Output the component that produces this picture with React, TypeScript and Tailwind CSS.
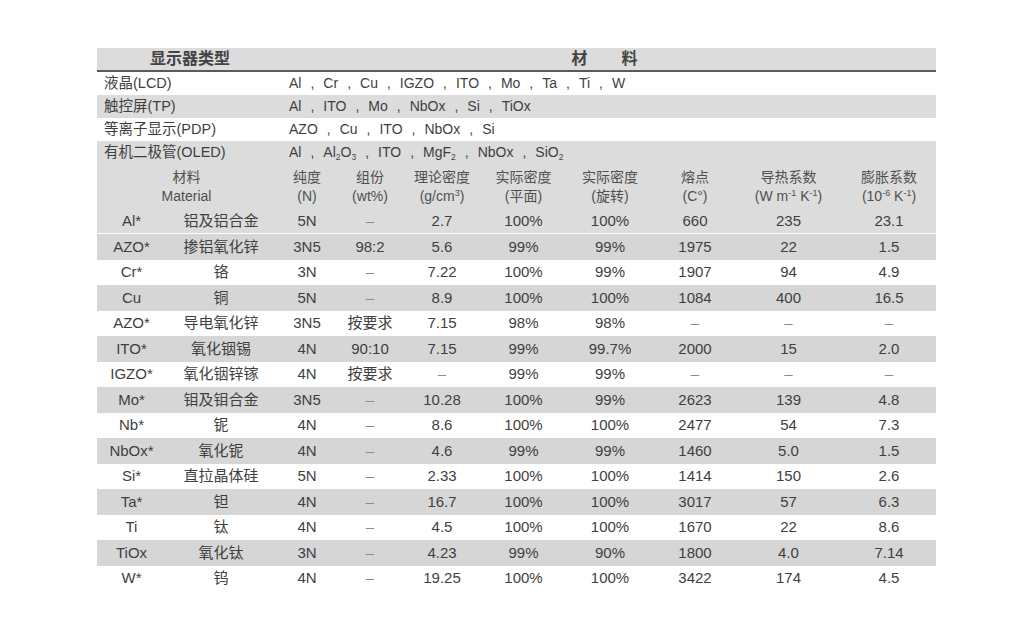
import React from 'react';

const font = { fontFamily: '"Liberation Sans", "Noto Sans CJK SC", sans-serif' };

const sub = 'text-[8.5px] align-baseline relative top-[3px]';

function Sep() {
  return <span className="mx-[9px]">,</span>;
}

function List({ items }: { items: React.ReactNode[] }) {
  return (
    <>
      {items.map((it, i) => (
        <React.Fragment key={i}>
          {i > 0 && <Sep />}
          {it}
        </React.Fragment>
      ))}
    </>
  );
}

const displays: { name: string; mats: React.ReactNode; gray: boolean }[] = [
  { name: '液晶(LCD)', mats: <List items={['Al', 'Cr', 'Cu', 'IGZO', 'ITO', 'Mo', 'Ta', 'Ti', 'W']} />, gray: false },
  { name: '触控屏(TP)', mats: <List items={['Al', 'ITO', 'Mo', 'NbOx', 'Si', 'TiOx']} />, gray: true },
  { name: '等离子显示(PDP)', mats: <List items={['AZO', 'Cu', 'ITO', 'NbOx', 'Si']} />, gray: false },
  {
    name: '有机二极管(OLED)',
    mats: (
      <List
        items={[
          'Al',
          <>
            Al<sub className={sub}>2</sub>O<sub className={sub}>3</sub>
          </>,
          'ITO',
          <>
            MgF<sub className={sub}>2</sub>
          </>,
          'NbOx',
          <>
            SiO<sub className={sub}>2</sub>
          </>,
        ]}
      />
    ),
    gray: true,
  },
];

const rows: string[][] = [
  ['AZO*', '掺铝氧化锌', '3N5', '98:2', '5.6', '99%', '99%', '1975', '22', '1.5'],
  ['Cr*', '铬', '3N', '–', '7.22', '100%', '99%', '1907', '94', '4.9'],
  ['Cu', '铜', '5N', '–', '8.9', '100%', '100%', '1084', '400', '16.5'],
  ['AZO*', '导电氧化锌', '3N5', '按要求', '7.15', '98%', '98%', '–', '–', '–'],
  ['ITO*', '氧化铟锡', '4N', '90:10', '7.15', '99%', '99.7%', '2000', '15', '2.0'],
  ['IGZO*', '氧化铟锌镓', '4N', '按要求', '–', '99%', '99%', '–', '–', '–'],
  ['Mo*', '钼及钼合金', '3N5', '–', '10.28', '100%', '99%', '2623', '139', '4.8'],
  ['Nb*', '铌', '4N', '–', '8.6', '100%', '100%', '2477', '54', '7.3'],
  ['NbOx*', '氧化铌', '4N', '–', '4.6', '99%', '99%', '1460', '5.0', '1.5'],
  ['Si*', '直拉晶体硅', '5N', '–', '2.33', '100%', '100%', '1414', '150', '2.6'],
  ['Ta*', '钽', '4N', '–', '16.7', '100%', '100%', '3017', '57', '6.3'],
  ['Ti', '钛', '4N', '–', '4.5', '100%', '100%', '1670', '22', '8.6'],
  ['TiOx', '氧化钛', '3N', '–', '4.23', '99%', '90%', '1800', '4.0', '7.14'],
  ['W*', '钨', '4N', '–', '19.25', '100%', '100%', '3422', '174', '4.5'],
];

const cols = 'grid grid-cols-[69px_110px_62px_64px_80px_83px_90px_80px_107px_94px]';

function Cell({ v }: { v: string }) {
  return (
    <div className={`flex items-center justify-center ${v === '–' ? 'text-[#8a8a8a]' : ''}`}>{v}</div>
  );
}

export default function App() {
  return (
    <div className="min-h-screen bg-white pt-[48px] pl-[97px] text-[#3f3f3f]" style={font}>
      <div className="w-[839px]">
        {/* 显示器类型 / 材料 */}
        <div className="flex h-[24px] bg-[#dcdcdc] border-b-2 border-[#5a5a5a] text-[16px] font-bold text-[#444]">
          <div className="w-[186px] flex items-center justify-center">显示器类型</div>
          <div className="flex-1 flex items-center justify-center gap-[34px] pr-[10px]">
            <span>材</span>
            <span>料</span>
          </div>
        </div>
        {displays.map((d) => (
          <div
            key={d.name}
            className={`flex h-[23px] items-center ${d.gray ? 'bg-[#dcdcdc]' : 'bg-white'}`}
          >
            <div className="w-[186px] pl-[7px] text-[14.5px]">{d.name}</div>
            <div className="flex-1 pl-[6px] text-[14px]">{d.mats}</div>
          </div>
        ))}

        {/* 材料属性表 */}
        <div className={`${cols} h-[45px] bg-[#dcdcdc] text-[14px] leading-[19px] text-[#505050]`}>
          <div className="col-span-2 flex flex-col items-center justify-center">
            <span>材料</span>
            <span>Material</span>
          </div>
          <div className="flex flex-col items-center justify-center">
            <span>纯度</span>
            <span>(N)</span>
          </div>
          <div className="flex flex-col items-center justify-center">
            <span>组份</span>
            <span>(wt%)</span>
          </div>
          <div className="flex flex-col items-center justify-center">
            <span>理论密度</span>
            <span>
              (g/cm<sup className="text-[9px]">3</sup>)
            </span>
          </div>
          <div className="flex flex-col items-center justify-center">
            <span>实际密度</span>
            <span>(平面)</span>
          </div>
          <div className="flex flex-col items-center justify-center">
            <span>实际密度</span>
            <span>(旋转)</span>
          </div>
          <div className="flex flex-col items-center justify-center">
            <span>熔点</span>
            <span>(C°)</span>
          </div>
          <div className="flex flex-col items-center justify-center">
            <span>导热系数</span>
            <span>
              (W m<sup className="text-[9px]">-1</sup> K<sup className="text-[9px]">-1</sup>)
            </span>
          </div>
          <div className="flex flex-col items-center justify-center">
            <span>膨胀系数</span>
            <span>
              (10<sup className="text-[9px]">-6</sup> K<sup className="text-[9px]">-1</sup>)
            </span>
          </div>
        </div>
        <div className={`${cols} h-[25px] bg-[#dcdcdc] border-b border-white text-[15px]`}>
          {['Al*', '铝及铝合金', '5N', '–', '2.7', '100%', '100%', '660', '235', '23.1'].map((v, i) => (
            <Cell key={i} v={v} />
          ))}
        </div>
        {rows.map((r, ri) => (
          <div
            key={ri}
            className={`${cols} h-[25.5px] text-[15px] ${ri % 2 === 0 ? 'bg-[#d6d6d6]' : 'bg-white'}`}
          >
            {r.map((v, i) => (
              <Cell key={i} v={v} />
            ))}
          </div>
        ))}
      </div>
    </div>
  );
}
